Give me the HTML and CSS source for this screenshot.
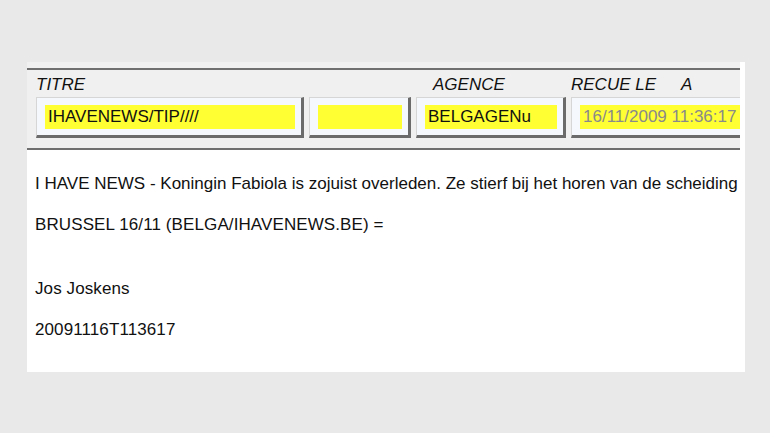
FILE: index.html
```html
<!DOCTYPE html>
<html>
<head>
  <title>Dépêche</title>
  <link rel="stylesheet" href="styles.css">
</head>
<body>
  <div class="panel">
    <div class="header">
      <div class="header-row">
        <div class="col col-titre">
          <div class="label">TITRE</div>
          <div class="field"><div class="value">IHAVENEWS/TIP////</div></div>
        </div>
        <div class="col col-extra">
          <div class="label"></div>
          <div class="field"><div class="value"></div></div>
        </div>
        <div class="col col-agence">
          <div class="label label-agence">AGENCE</div>
          <div class="field"><div class="value">BELGAGENu</div></div>
        </div>
        <div class="col col-recue">
          <div class="label"><span>RECUE LE</span><span class="label-a">A</span></div>
          <div class="field"><div class="value value-date">16/11/2009 11:36:17</div></div>
        </div>
      </div>
    </div>

    <div class="body-text">
      <p class="lead">I HAVE NEWS - Koningin Fabiola is zojuist overleden. Ze stierf bij het horen van de scheiding</p>
      <p>BRUSSEL 16/11 (BELGA/IHAVENEWS.BE) =</p>
      <div class="blank"></div>
      <p>Jos Joskens</p>
      <p>20091116T113617</p>
    </div>
  </div>
</body>
</html>
```

FILE: styles.css
```css
body {
  margin: 0;
  padding: 62px 25px 0 27px;
  background-color: #e9e9e9;
  font-family: "Liberation Sans", Arial, sans-serif;
  font-size: 17px;
  color: #111;
}

.panel {
  width: 718px;
  height: 310px;
  background-color: #fff;
  overflow: hidden;
}

/* Bandeau du haut */
.header {
  background-color: #f0f0f0;
  margin-right: 5px;
  padding-top: 6px;
}

.header-row {
  display: flex;
  gap: 5px;
  padding: 0 0 10px 9px;
  border-top: 2px solid #6f6f6f;
  border-bottom: 2px solid #6f6f6f;
  overflow: hidden;
}

.col {
  display: flex;
  flex-direction: column;
  flex-shrink: 0;
}

.col-titre { width: 268px; }
.col-extra { width: 102px; }
.col-agence { width: 150px; }
.col-recue { width: 200px; }

.label {
  height: 27px;
  box-sizing: border-box;
  padding: 5px 0 0 0;
  line-height: 20px;
  font-style: italic;
  color: #111;
  white-space: nowrap;
}

.label-agence {
  padding-left: 17px;
}

.label-a {
  margin-left: 25px;
}

.field {
  height: 41px;
  box-sizing: border-box;
  background-color: #f5f8fc;
  border-top: 1px solid #d6d6d6;
  border-left: 1px solid #d6d6d6;
  border-right: 3px solid #6b6b6b;
  border-bottom: 3px solid #6b6b6b;
  padding: 7px 6px 6px 8px;
}

.value {
  height: 24px;
  line-height: 24px;
  padding-left: 3px;
  background-color: #ffff33;
  color: #111;
  white-space: nowrap;
  overflow: hidden;
}

.value-date {
  color: #8a8a8a;
}

/* Texte de la dépêche */
.body-text {
  padding: 24px 0 0 8px;
  letter-spacing: 0.1px;
}

.body-text p {
  margin: 0 0 21px;
  line-height: 20px;
  white-space: nowrap;
}

.body-text .lead {
  letter-spacing: 0;
}

.blank {
  height: 23px;
}
```
